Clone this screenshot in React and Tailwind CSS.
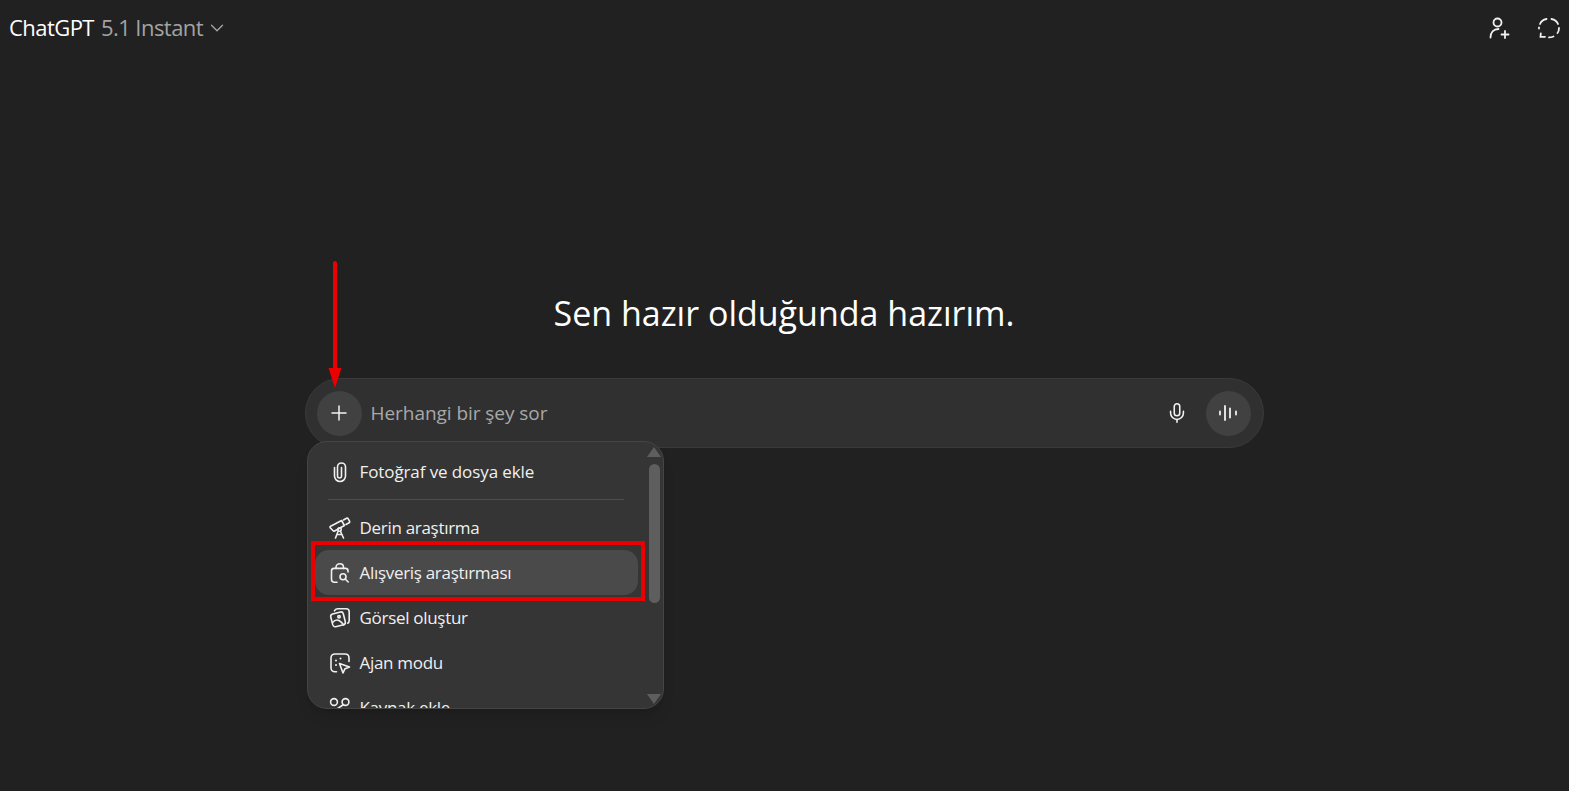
import React from 'react';
import { ChevronDown, Plus, Mic } from 'lucide-react';

const font = "font-['Open_Sans','Noto_Sans',sans-serif]";

const Ic = ({ children }) => (
    <svg width="22" height="22" viewBox="0 0 22 22" fill="none" stroke="currentColor" strokeWidth="1.6" strokeLinecap="round" strokeLinejoin="round" className="shrink-0">
        {children}
    </svg>
);

const Clip = () => (
    <Ic>
        <path d="M5.500 6.500v8.500a5.500 5.500 0 0 0 11 0V6a4 4 0 0 0-8 0v9a2 2 0 0 0 4 0V6.500" />
    </Ic>
);

const Telescope = () => (
    <Ic>
        <path d="M1.200 10.800c-.3-.6-.1-1.200.4-1.500l11-5.800 2.800 5-9.800 5.500c-.6.3-1.200.2-1.500-.3l-2.900-2.900z" />
        <path d="M14.500 3l3-1.700c.7-.3 1.300-.1 1.700.5l1.300 2.400c.3.600.2 1.200-.4 1.600L17 7.500" />
        <circle cx="10.500" cy="12.500" r="1.700" />
        <path d="M11.500 14.500l3 6.500M9 14.500l-2.500 6.500M8.200 17.500h4.800" />
    </Ic>
);

const ShoppingSearch = () => (
    <Ic>
        <path d="M8 20.200H5.500c-1.700 0-3-1.300-3-3V9c0-1.500 1-2.600 2.500-2.600h11.500c1.500 0 2.500 1 2.500 2.500v1.100" />
        <path d="M7 6.400V5.300c0-2.100 1.700-3.600 3.800-3.600s3.700 1.500 3.700 3.600v1.100" />
        <circle cx="14" cy="14.800" r="3" />
        <path d="M16.200 17l3 3" />
    </Ic>
);

const Images = () => (
    <Ic>
        <path d="M1.700 9.800c-.2-1.400.5-2.400 1.900-2.800l7.800-2c1.400-.3 2.500.4 2.900 1.800l2 8c.3 1.400-.4 2.500-1.800 2.900l-7.800 2c-1.400.3-2.500-.4-2.900-1.800l-2.100-8.100z" />
        <path d="M5.500 3.800C6 2.500 7 1.700 8.500 1.700h8.700c1.800 0 3 1.200 3 3v8.800c0 1.200-.5 2.200-1.500 2.700" />
        <circle cx="10" cy="9.800" r="1.200" />
        <path d="M3.500 15.500c2-2.300 4.500-3 6.500-2s3.500 2.600 4.700 4.500" />
    </Ic>
);

const AgentCursor = () => (
    <Ic>
        <path d="M7.500 19.800H6c-2.400 0-4-1.600-4-4V6c0-2.400 1.600-4 4-4h10c2.400 0 4 1.600 4 4v3.500" />
        <path d="M10.500 11.500l10 3.500-4.500 1.700-2 4.300-3.500-9.500z" />
        <circle cx="7" cy="8.500" r="1" fill="currentColor" stroke="none" />
        <circle cx="11.500" cy="6.500" r="1" fill="currentColor" stroke="none" />
        <circle cx="7" cy="13" r="1" fill="currentColor" stroke="none" />
    </Ic>
);

const Connectors = () => (
    <Ic>
        <circle cx="5" cy="5" r="3.400" />
        <circle cx="16.500" cy="5" r="3.400" />
        <path d="M6.500 13l8-5.500M5 13a3.400 3.400 0 1 0 .1 0" />
    </Ic>
);

const menuItems = [
    { label: 'Derin araştırma', icon: <Telescope /> },
    { label: 'Alışveriş araştırması', icon: <ShoppingSearch />, active: true },
    { label: 'Görsel oluştur', icon: <Images /> },
    { label: 'Ajan modu', icon: <AgentCursor /> },
    { label: 'Kaynak ekle', icon: <Connectors /> },
];

const MenuRow = ({ icon, label, active }) => (
    <div className={`flex h-[45px] shrink-0 items-center gap-[9px] rounded-[14px] px-[14px] text-[17px] tracking-[-0.3px] text-[#f0f0f0] ${active ? 'bg-[#4a4a4a]' : ''}`}>
        {icon}
        <span>{label}</span>
    </div>
);

const Scrollbar = () => (
    <div className="flex w-[17px] shrink-0 flex-col items-center pt-[5px]">
        <div className="h-0 w-0 border-x-[7px] border-b-[10px] border-x-transparent border-b-[#5e5e5e]" />
        <div className="mt-[7px] h-[139px] w-[11px] rounded-full bg-[#5e5e5e]" />
        <div className="mt-auto mb-[4px] h-0 w-0 border-x-[7px] border-t-[10px] border-x-transparent border-t-[#5e5e5e]" />
    </div>
);

const Menu = () => (
    <div className="absolute left-[2px] top-[63px] flex h-[268px] w-[357px] overflow-hidden rounded-[20px] border border-[#454545] bg-[#353535] shadow-lg">
        <div className="min-w-0 flex-1 pl-[7px] pr-[8px] pt-[7px]">
            <div className="flex h-[45px] items-center gap-[9px] px-[14px] text-[17px] tracking-[-0.1px] text-[#f0f0f0]">
                <Clip />
                <span>Fotoğraf ve dosya ekle</span>
            </div>
            <div className="ml-[13px] mr-[14px] mt-[5px] mb-[5px] h-px bg-[#4d4d4d]" />
            {menuItems.map((item) => (
                <MenuRow key={item.label} {...item} />
            ))}
        </div>
        <Scrollbar />
        {/* annotation box */}
        <div className="absolute left-[3px] top-[99px] h-[60px] w-[334px] border-[4px] border-[#ea0000]" />
    </div>
);

const Arrow = () => (
    <svg width="14" height="128" viewBox="0 0 14 128" className="absolute left-[23px] top-[-117px] z-10">
        <rect x="5" y="0" width="4" height="112" rx="2" fill="#ea0000" />
        <path d="M.5 107h13l-6.500 20z" fill="#ea0000" />
    </svg>
);

export default function App() {
    return (
        <div className={`flex h-[791px] w-full flex-col bg-[#212121] ${font}`}>
            <header className="flex h-[56px] items-center justify-between pb-[1px] pl-[9px] pr-[8px]">
                <div className="flex items-center text-[22px] tracking-[-0.55px]">
                    <span className="text-white">ChatGPT</span>
                    <span className="ml-[7px] text-[#a3a3a3]">5.1 Instant</span>
                    <ChevronDown size={22} strokeWidth={1.500} className="ml-[3px] text-[#a3a3a3]" />
                </div>
                <div className="flex items-center gap-[26px] text-[#f0f0f0]">
                    <svg width="24" height="24" viewBox="0 0 24 24" fill="none" stroke="currentColor" strokeWidth="1.800" strokeLinecap="round">
                        <circle cx="10.500" cy="6.500" r="4" />
                        <path d="M3.500 21.500c0-5 3-8.500 8-8.500" />
                        <path d="M18 15v7M14.500 18.500h7" />
                    </svg>
                    <svg width="24" height="24" viewBox="0 0 24 24" fill="none" stroke="currentColor" strokeWidth="1.800" strokeLinecap="round">
                        <path d="M9.500 3c-3 .6-5.500 2.500-6.500 5M14.500 3c3 .6 5.500 2.500 6.500 5M22 12c0 2-.5 3.800-1.500 5M16.500 20.500c-1.500.6-3 .9-4.500.9M8 20.800H3.500l.3-3.300M2 12.500v-1" />
                    </svg>
                </div>
            </header>

            <main className="flex flex-col items-center pr-[1px] pt-[234px]">
                <h1 className="text-[34px] font-normal leading-[46px] tracking-[0px] text-white">Sen hazır olduğunda hazırım.</h1>

                <div className="relative mt-[42px] w-[959px]">
                    <Arrow />
                    <div className="flex h-[70px] items-center rounded-full border border-[#3a3a3a] bg-[#303030] pl-[11px] pr-[12px]">
                        <div className="flex h-[45px] w-[45px] items-center justify-center rounded-full bg-[#414141] text-[#f2f2f2]">
                            <Plus size={24} strokeWidth={1.500} />
                        </div>
                        <span className="ml-[9px] flex-1 text-[19px] tracking-[-0.05px] text-[#a8a8a8]">Herhangi bir şey sor</span>
                        <Mic size={22} strokeWidth={1.700} className="mr-[18px] text-[#f2f2f2]" />
                        <div className="flex h-[45px] w-[45px] items-center justify-center rounded-full bg-[#414141] text-[#f2f2f2]">
                            <svg width="20" height="20" viewBox="0 0 20 20" fill="none" stroke="currentColor" strokeWidth="1.800" strokeLinecap="round">
                                <path d="M2 8.500v3M7 3v14M12 5.500v9M18 8.500v3" />
                            </svg>
                        </div>
                    </div>
                    <Menu />
                </div>
            </main>
        </div>
    );
}
